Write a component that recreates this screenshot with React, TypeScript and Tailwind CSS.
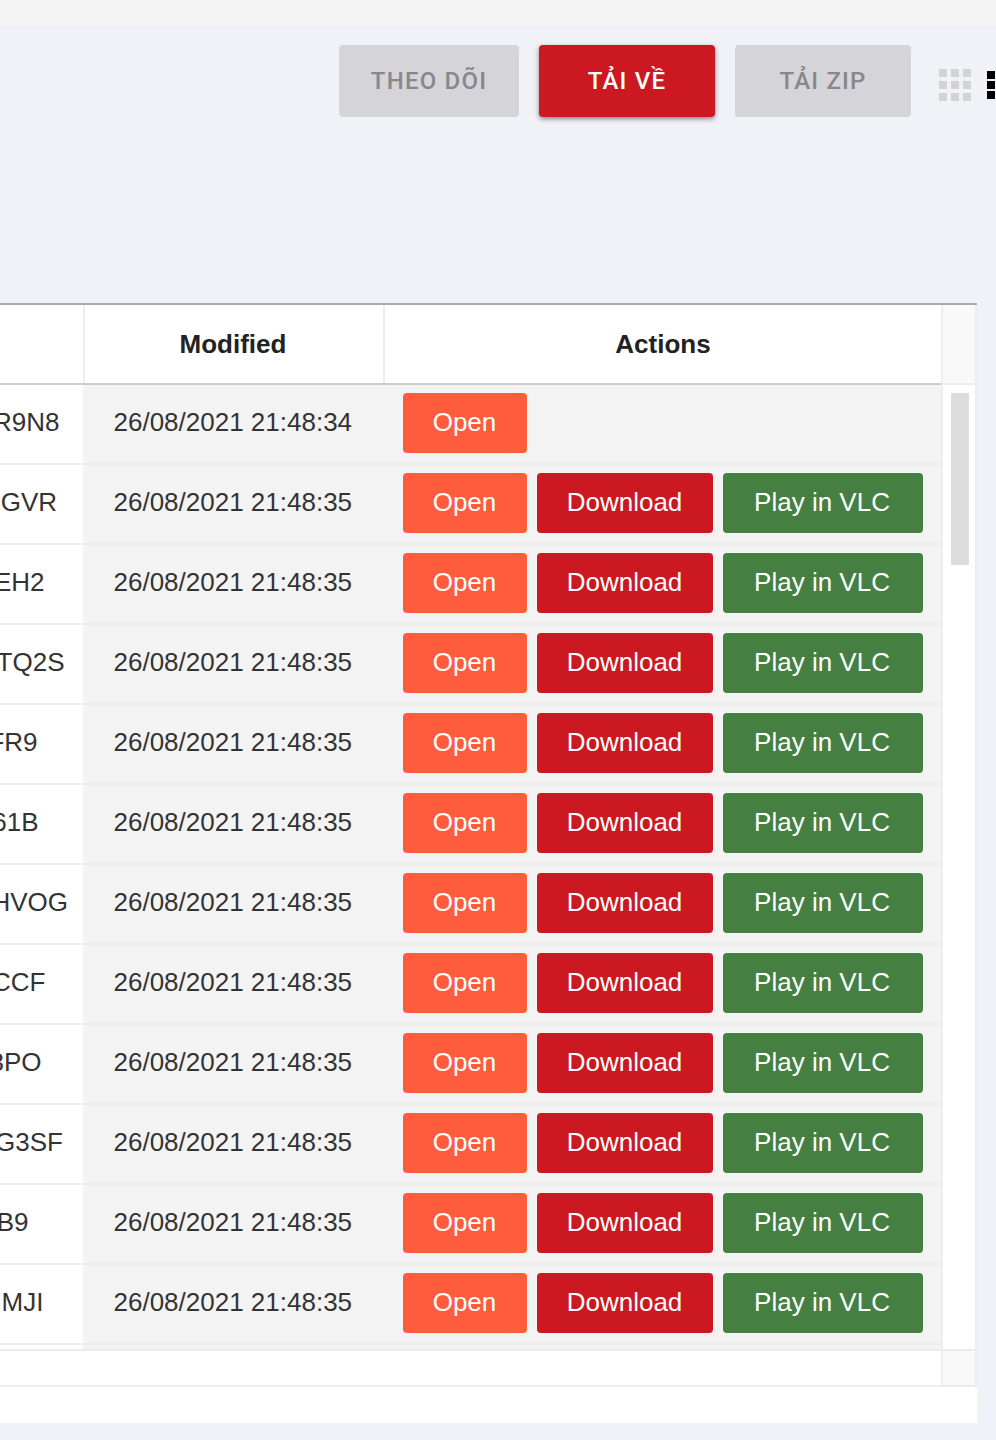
type Row = { id: string; idEnd: number; modified: string; folder?: boolean };

// idEnd: distance from the left edge at which the scrolled identifier stops
const rows: Row[] = [
  { id: "R9N8", idEnd: 59.5, modified: "26/08/2021 21:48:34", folder: true },
  { id: "GVR", idEnd: 57, modified: "26/08/2021 21:48:35" },
  { id: "EH2", idEnd: 44.5, modified: "26/08/2021 21:48:35" },
  { id: "TQ2S", idEnd: 64.5, modified: "26/08/2021 21:48:35" },
  { id: "FR9", idEnd: 37.5, modified: "26/08/2021 21:48:35" },
  { id: "61B", idEnd: 38.5, modified: "26/08/2021 21:48:35" },
  { id: "HVOG", idEnd: 68, modified: "26/08/2021 21:48:35" },
  { id: "CCF", idEnd: 45.5, modified: "26/08/2021 21:48:35" },
  { id: "3PO", idEnd: 41.5, modified: "26/08/2021 21:48:35" },
  { id: "G3SF", idEnd: 63, modified: "26/08/2021 21:48:35" },
  { id: "B9", idEnd: 28.5, modified: "26/08/2021 21:48:35" },
  { id: "MJI", idEnd: 43.5, modified: "26/08/2021 21:48:35" },
];

function Toolbar() {
  return (
    <div className="flex h-[278px] items-start pt-5 pl-[339px] font-[Roboto,sans-serif] text-[24px] font-medium tracking-[1.2px]">
      <button className="h-[72px] w-[180px] shrink-0 rounded-[4px] bg-[#d5d4d9] text-[#88878c]">
        THEO DÕI
      </button>
      <button className="ml-5 h-[72px] w-[176px] shrink-0 rounded-[4px] bg-[#cc1820] text-white shadow-[0_2px_5px_rgba(0,0,0,0.45)]">
        TẢI VỀ
      </button>
      <button className="ml-5 h-[72px] w-[176px] shrink-0 rounded-[4px] bg-[#d5d4d9] text-[#88878c]">
        TẢI ZIP
      </button>
      <svg className="mt-6 ml-7 shrink-0" width="32" height="32" fill="#d3d3d3">
        {[0, 12, 24].map((y) =>
          [0, 12, 24].map((x) => <rect key={`${x}-${y}`} x={x} y={y} width="8" height="8" />)
        )}
      </svg>
      <svg className="mt-[26px] ml-4 shrink-0" width="8" height="28" fill="#000">
        {[0, 10, 20].map((y) => (
          <rect key={y} y={y} width="8" height="8" />
        ))}
      </svg>
    </div>
  );
}

function TableRow({ row }: { row: Row }) {
  return (
    <div className="flex h-20 shrink-0">
      <div
        className="flex w-[83px] shrink-0 justify-end overflow-hidden border-b-2 border-[#ededed] pb-1"
        style={{ paddingRight: 83 - row.idEnd }}
      >
        <span className="leading-[74px] whitespace-nowrap">{row.id}</span>
      </div>
      <div className="flex flex-1 border-b-2 border-[#ededed] bg-[#f3f3f3] text-white">
        <div className="w-[320px] shrink-0 pl-[30.5px] leading-[74px] whitespace-nowrap text-[#333]">
          {row.modified}
        </div>
        <div className="flex gap-[10px] pt-2 leading-[58px]">
          <button className="h-[60px] w-[124px] rounded-[4px] bg-[#ff5c3e] pr-px pb-[2px]">Open</button>
          {!row.folder && (
            <>
              <button className="h-[60px] w-[176px] rounded-[4px] bg-[#cc1820] pr-px pb-[2px]">Download</button>
              <button className="h-[60px] w-[200px] rounded-[4px] bg-[#458042] pr-[2px] pb-[2px]">Play in VLC</button>
            </>
          )}
        </div>
      </div>
    </div>
  );
}

export default function App() {
  return (
    <div className="h-[1440px] w-[996px] overflow-hidden bg-[#f1f2f7]">
      <div className="h-[25px] bg-[#f4f4f4]" />
      <Toolbar />
      <div className="flex h-[1120px] w-[977px] flex-col border-t-2 border-[#aaa] bg-white font-['Liberation_Sans',Arial,sans-serif] text-[26px] text-[#333]">
        <div className="flex h-[1082px] border-r-2 border-b-2 border-[#ededed]">
          <div className="flex w-[941px] flex-col">
            <div className="flex h-20 border-b-2 border-[#ccc] text-center leading-[78px] font-bold text-[#222]">
              <div className="w-[85px] border-r-2 border-[#ededed]" />
              <div className="w-[300px] border-r-2 border-[#ededed] pr-[2px]">Modified</div>
              <div className="flex-1">Actions</div>
            </div>
            <div className="flex h-[966px] flex-col border-b-2 border-[#ededed]">
              {rows.map((row) => (
                <TableRow key={row.id} row={row} />
              ))}
              <div className="ml-[83px] h-1 bg-[#f3f3f3]" />
            </div>
          </div>
          <div className="flex w-[34px] flex-col border-l-2 border-[#ededed]">
            <div className="h-20 border-b-2 border-[#ededed] bg-[#f9f9f9]" />
            <div className="h-[966px] border-b-2 border-[#ededed] pt-2 pl-2">
              <div className="h-[172px] w-[18px] bg-[#dcdcdc]" />
            </div>
            <div className="flex-1 bg-[#f9f9f9]" />
          </div>
        </div>
      </div>
    </div>
  );
}
